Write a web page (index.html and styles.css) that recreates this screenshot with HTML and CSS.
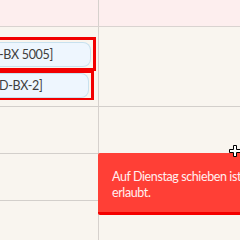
FILE: index.html
```html
<!DOCTYPE html>
<html>
<head>
<meta charset="utf-8">
<link rel="stylesheet" href="styles.css">
</head>
<body>
<div class="cal">
  <div class="head">
    <div class="hcell left"></div>
    <div class="hcell"></div>
  </div>
  <div class="row r1">
    <div class="cell left">
      <div class="sel sel1"><div class="card">-BX 5005]</div></div>
      <div class="sel sel2"><div class="card">D-BX-2]</div></div>
    </div>
    <div class="cell"></div>
  </div>
  <div class="row r2">
    <div class="cell left"></div>
    <div class="cell"></div>
  </div>
  <div class="row r3">
    <div class="cell left"></div>
    <div class="cell"></div>
  </div>
  <div class="row r4">
    <div class="cell left"></div>
    <div class="cell"></div>
  </div>
</div>
<div class="toast">Auf Dienstag schieben ist nicht erlaubt.</div>
<svg class="cursor" width="12" height="12" viewBox="0 0 12 12">
  <path d="M4.5 0.5h3v4h4v3h-4v4h-3v-4h-4v-3h4z" fill="#fff" stroke="#000" stroke-width="1"/>
</svg>
</body>
</html>
```

FILE: styles.css
```css
html, body {
  margin: 0;
  padding: 0;
  width: 240px;
  height: 240px;
  overflow: hidden;
  background: #f9f5ef;
  font-family: "Lato", "Liberation Sans", sans-serif;
}
.cal {
  display: flex;
  flex-direction: column;
  width: 240px;
}
.head {
  display: grid;
  grid-template-columns: 99px 1fr;
  height: 26px;
  background: #fdeeee;
  border-bottom: 1px solid #d9d3d0;
}
.row {
  display: grid;
  grid-template-columns: 99px 1fr;
  border-bottom: 1px solid #d3cfcb;
}
.hcell.left, .cell.left {
  border-right: 1px solid #d6d1cd;
}
.r1 { height: 79px; }
.r2 { height: 46px; }
.r3 { height: 46px; }
.r4 { height: 40px; border-bottom: none; }
.r1 .cell.left {
  display: flex;
  flex-direction: column;
  padding-top: 10px;
  overflow: hidden;
}
.sel {
  box-sizing: border-box;
  margin-left: -20px;
  border: 3px solid #f20000;
  border-left: none;
}
.sel1 {
  width: 116px;
  padding: 2px 2px 1px 0;
}
.sel2 {
  width: 114px;
  border-width: 2px 3px 2px 0;
  padding: 0 2px 0 0;
}
.card {
  box-sizing: border-box;
  height: 25px;
  padding-left: 19px;
  background: #eef6fe;
  border: 1px solid #c8e1ee;
  border-left: none;
  border-radius: 0 8px 8px 0;
  color: #3d3d3d;
  font-size: 12.5px;
  letter-spacing: -0.3px;
  line-height: 23px;
  white-space: nowrap;
}
.toast {
  position: absolute;
  left: 98px;
  top: 153px;
  width: 214px;
  height: 62px;
  box-sizing: border-box;
  padding: 16px 14px 0 14px;
  background: #ff3f36;
  border-bottom: 3px solid #f40000;
  border-radius: 2px;
  color: #fff0f0;
  font-size: 12.5px;
  letter-spacing: -0.4px;
  line-height: 16px;
}
.cursor {
  position: absolute;
  left: 229px;
  top: 145px;
}
```
